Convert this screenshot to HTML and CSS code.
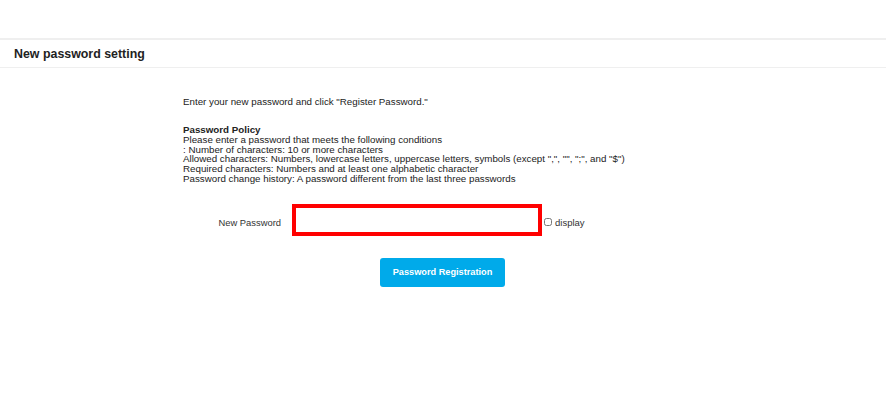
FILE: index.html
```html
<!DOCTYPE html>
<html lang="en">
<head>
    <meta charset="UTF-8">
    <meta name="viewport" content="width=device-width, initial-scale=1.0">
    <title>New password setting</title>
    <link rel="stylesheet" href="styles.css">
</head>
<body>

    <div class="page-header">
        <h1>New password setting</h1>
    </div>

    <div class="container">
        <p class="intro">Enter your new password and click "Register Password."</p>

        <div class="policy">
            <h2>Password Policy</h2>
            <p>Please enter a password that meets the following conditions</p>
            <p>: Number of characters: 10 or more characters</p>
            <p>Allowed characters: Numbers, lowercase letters, uppercase letters, symbols (except ",", "", ";", and "$")</p>
            <p>Required characters: Numbers and at least one alphabetic character</p>
            <p>Password change history: A password different from the last three passwords</p>
        </div>

        <form id="passwordform">
            <div class="field-row">
                <label for="password" class="field-label">New Password</label>
                <input id="password" type="password" name="password">
                <label class="show-toggle"><input type="checkbox" id="showPassword"> display</label>
            </div>

            <div class="button-row">
                <button type="submit">Password Registration</button>
            </div>
        </form>
    </div>

</body>
</html>
```

FILE: styles.css
```css
body {
    font-family: 'Liberation Sans', Arial, sans-serif;
    background-color: #ffffff;
    color: #222222;
    margin: 0;
    padding-top: 38px;
}

.page-header {
    border-top: 2px solid #efefef;
    border-bottom: 1px solid #efefef;
    height: 27px;
    display: flex;
    align-items: center;
    padding-left: 14px;
}

.page-header h1 {
    font-size: 12.4px;
    font-weight: bold;
    color: #222222;
    margin: 0;
}

.container {
    padding-left: 183px;
    padding-top: 28px;
    font-size: 9.75px;
}

.intro {
    margin: 0 0 18px 0;
}

.policy h2 {
    font-size: 9.75px;
    margin: 0;
    line-height: 9.8px;
}

.policy p {
    margin: 0;
    line-height: 9.8px;
}

.field-row {
    display: flex;
    align-items: center;
    margin-top: 20px;
}

.field-label {
    width: 109px;
    text-align: right;
    padding-right: 11px;
    padding-top: 5px;
    box-sizing: border-box;
    font-size: 9.4px;
    color: #333333;
}

#password {
    width: 250px;
    height: 32px;
    box-sizing: border-box;
    border: 4px solid #ff0000;
    outline: none;
    margin: 0;
}

.show-toggle {
    display: flex;
    align-items: center;
    margin-top: 5px;
    font-size: 9.5px;
    color: #333333;
}

.show-toggle input {
    width: 8px;
    height: 8px;
    margin: 0 3px 0 2px;
}

.button-row {
    margin-top: 22px;
    padding-left: 197px;
}

button {
    font-family: 'Liberation Sans', Arial, sans-serif;
    font-size: 9.2px;
    font-weight: bold;
    background-color: #00aaea;
    color: #ffffff;
    border: none;
    border-radius: 3px;
    width: 125px;
    height: 29px;
    cursor: pointer;
}
```
